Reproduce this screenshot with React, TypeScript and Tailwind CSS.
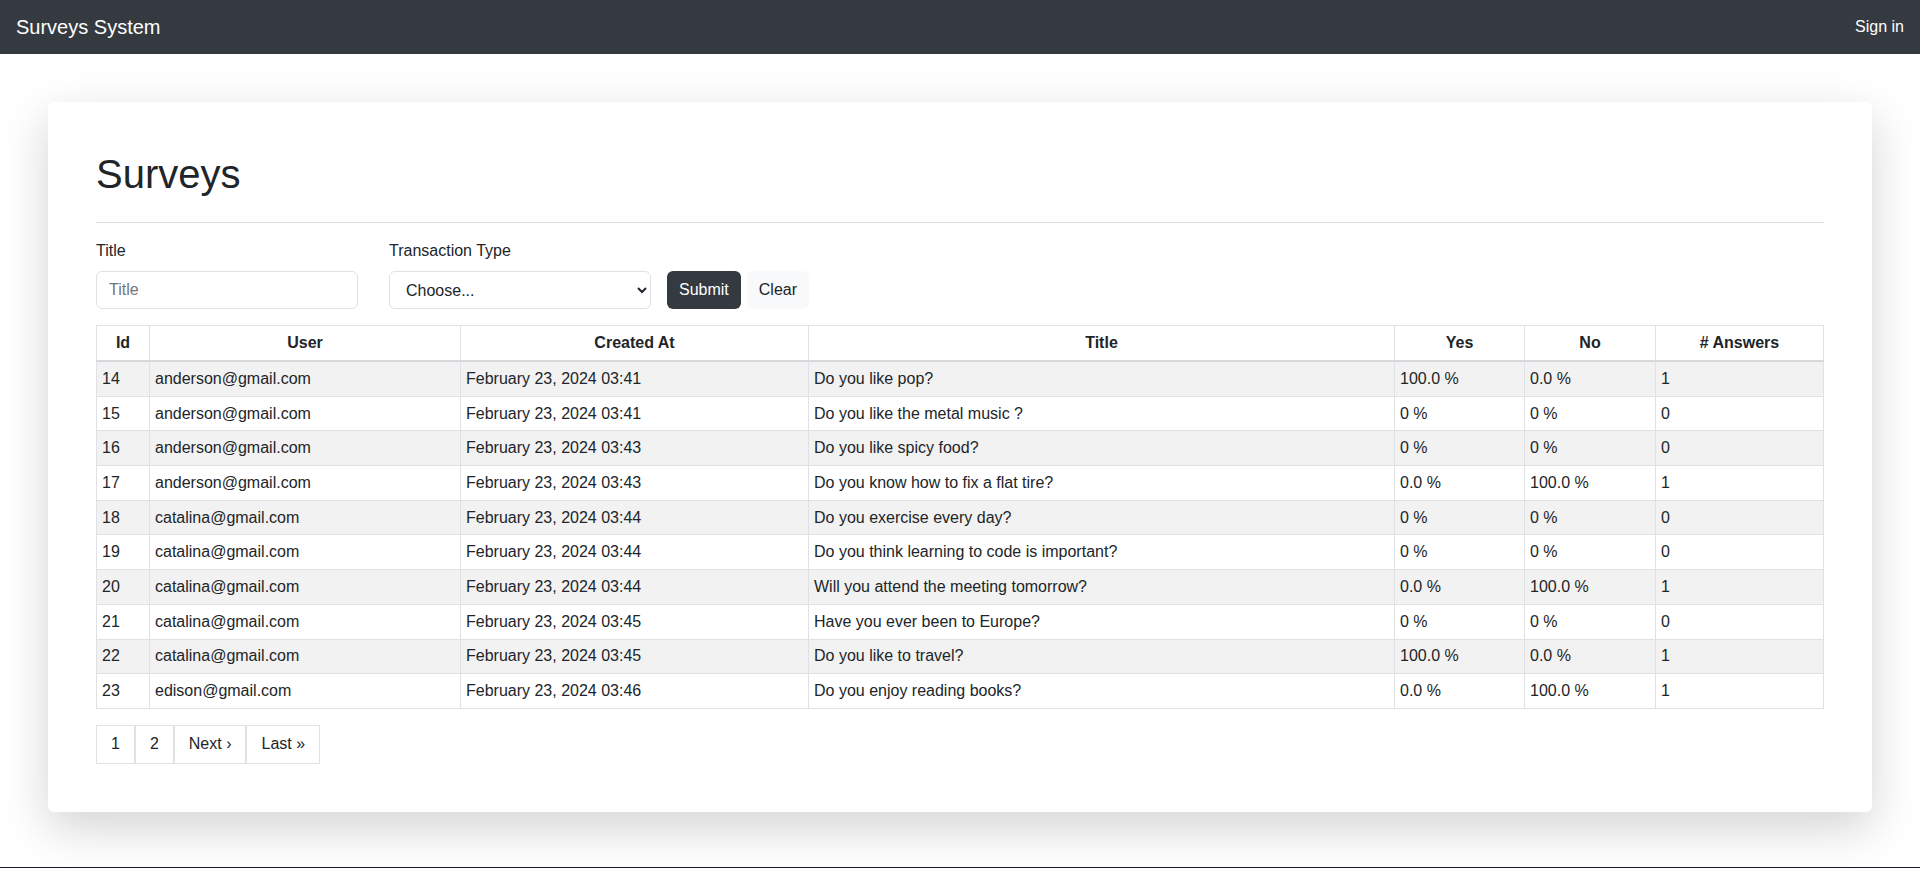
import React, { useState } from "react";

type Survey = {
  id: number;
  user: string;
  createdAt: string;
  title: string;
  yes: string;
  no: string;
  answers: number;
};

const surveys: Survey[] = [
  { id: 14, user: "anderson@gmail.com", createdAt: "February 23, 2024 03:41", title: "Do you like pop?", yes: "100.0 %", no: "0.0 %", answers: 1 },
  { id: 15, user: "anderson@gmail.com", createdAt: "February 23, 2024 03:41", title: "Do you like the metal music ?", yes: "0 %", no: "0 %", answers: 0 },
  { id: 16, user: "anderson@gmail.com", createdAt: "February 23, 2024 03:43", title: "Do you like spicy food?", yes: "0 %", no: "0 %", answers: 0 },
  { id: 17, user: "anderson@gmail.com", createdAt: "February 23, 2024 03:43", title: "Do you know how to fix a flat tire?", yes: "0.0 %", no: "100.0 %", answers: 1 },
  { id: 18, user: "catalina@gmail.com", createdAt: "February 23, 2024 03:44", title: "Do you exercise every day?", yes: "0 %", no: "0 %", answers: 0 },
  { id: 19, user: "catalina@gmail.com", createdAt: "February 23, 2024 03:44", title: "Do you think learning to code is important?", yes: "0 %", no: "0 %", answers: 0 },
  { id: 20, user: "catalina@gmail.com", createdAt: "February 23, 2024 03:44", title: "Will you attend the meeting tomorrow?", yes: "0.0 %", no: "100.0 %", answers: 1 },
  { id: 21, user: "catalina@gmail.com", createdAt: "February 23, 2024 03:45", title: "Have you ever been to Europe?", yes: "0 %", no: "0 %", answers: 0 },
  { id: 22, user: "catalina@gmail.com", createdAt: "February 23, 2024 03:45", title: "Do you like to travel?", yes: "100.0 %", no: "0.0 %", answers: 1 },
  { id: 23, user: "edison@gmail.com", createdAt: "February 23, 2024 03:46", title: "Do you enjoy reading books?", yes: "0.0 %", no: "100.0 %", answers: 1 },
];

const headers = ["Id", "User", "Created At", "Title", "Yes", "No", "# Answers"];

const App = () => {
  const [title, setTitle] = useState("");
  const [type, setType] = useState("");

  return (
    <div className="min-h-[869px] bg-white text-[#212529] font-['Liberation_Sans',Arial,sans-serif] text-base leading-6">
      {/* navbar */}
      <nav className="h-[54px] bg-[#343a40] flex items-center justify-between px-4">
        <span className="text-white text-[20px]">Surveys System</span>
        <a className="text-white text-base">Sign in</a>
      </nav>

      <main className="pt-12 pb-[55px] px-12">
        <div className="bg-white rounded-md shadow-[0_1rem_3rem_rgba(0,0,0,0.175)] p-12">
          <h1 className="text-[40px] leading-[48px]">Surveys</h1>
          <hr className="mt-6 mb-4 border-t border-[#dedfe0]" />

          <form
            className="flex items-end mb-4"
            onSubmit={(e) => e.preventDefault()}
          >
            <div className="w-[262px]">
              <label className="block mb-2">Title</label>
              <input
                type="text"
                placeholder="Title"
                value={title}
                onChange={(e) => setTitle(e.target.value)}
                className="w-full h-[38px] border border-[#dee2e6] rounded-md px-3 placeholder:text-[#70767c] outline-none"
              />
            </div>

            <div className="w-[262px] ml-[31px]">
              <label className="block mb-2">Transaction Type</label>
              <select
                value={type}
                onChange={(e) => setType(e.target.value)}
                className="w-full h-[38px] border border-[#dee2e6] rounded-md pl-3 pr-1 bg-white outline-none"
              >
                <option value="">Choose...</option>
                <option value="yes">Yes</option>
                <option value="no">No</option>
              </select>
            </div>

            <button
              type="submit"
              className="ml-4 h-[38px] px-3 rounded-md bg-[#343a40] text-white"
            >
              Submit
            </button>
            <button
              type="button"
              className="ml-[6px] h-[38px] px-3 rounded-md bg-[#f8f9fa] text-[#212529]"
              onClick={() => {
                setTitle("");
                setType("");
              }}
            >
              Clear
            </button>
          </form>

          <table className="w-full table-fixed border-collapse mb-4">
            <colgroup>
              <col className="w-[53px]" />
              <col className="w-[311px]" />
              <col className="w-[348px]" />
              <col className="w-[586px]" />
              <col className="w-[130px]" />
              <col className="w-[131px]" />
              <col />
            </colgroup>
            <thead>
              <tr>
                {headers.map((h) => (
                  <th
                    key={h}
                    className="border border-[#dee2e6] border-b-2 border-b-[#d6d9dc] px-[5px] py-[5px] font-bold text-center"
                  >
                    {h}
                  </th>
                ))}
              </tr>
            </thead>
            <tbody>
              {surveys.map((s, i) => (
                <tr key={s.id} className={i % 2 === 0 ? "bg-[#f2f2f2]" : "bg-white"}>
                  <td className="border border-[#dee2e6] px-[5px] py-[4.85px]">{s.id}</td>
                  <td className="border border-[#dee2e6] px-[5px] py-[4.85px]">{s.user}</td>
                  <td className="border border-[#dee2e6] px-[5px] py-[4.85px]">{s.createdAt}</td>
                  <td className="border border-[#dee2e6] px-[5px] py-[4.85px]">{s.title}</td>
                  <td className="border border-[#dee2e6] px-[5px] py-[4.85px]">{s.yes}</td>
                  <td className="border border-[#dee2e6] px-[5px] py-[4.85px]">{s.no}</td>
                  <td className="border border-[#dee2e6] px-[5px] py-[4.85px]">{s.answers}</td>
                </tr>
              ))}
            </tbody>
          </table>

          <ul className="flex">
            {["1", "2", "Next ›", "Last »"].map((p) => (
              <li
                key={p}
                className="h-[39px] px-[14px] flex items-center border border-[#dee2e6] text-[#212529] cursor-pointer"
              >
                {p}
              </li>
            ))}
          </ul>
        </div>
      </main>

      <footer className="h-px bg-[#1b1a2b]" />
    </div>
  );
};

export default App;
